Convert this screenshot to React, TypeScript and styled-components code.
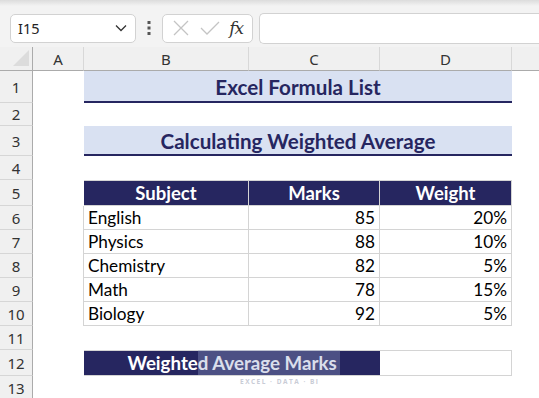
import React from 'react';
import styled, { createGlobalStyle } from 'styled-components';

const GlobalStyle = createGlobalStyle`
  html, body {
    margin: 0;
    padding: 0;
    background: #ffffff;
    overflow: hidden;
  }
  body {
    font-family: 'Noto Sans', 'Open Sans', sans-serif;
  }
`;

const NAVY = '#262660';
const TITLE_FILL = '#d9e1f2';
const GRID = '#d4d4d4';
const COLS = '33px 51px 165px 131px 132px 1fr';

const Page = styled.div`
  width: 539px;
  height: 398px;
  overflow: hidden;
  background: #ffffff;
  position: relative;
`;

const TopShade = styled.div`
  height: 6px;
  background: linear-gradient(#dcdcdc, #f3f3f3);
`;

const FormulaBar = styled.div`
  display: flex;
  align-items: center;
  height: 41px;
  padding: 3px 0 0 10px;
  box-sizing: border-box;
  background: #f3f3f3;
`;

const NameBox = styled.div`
  width: 126px;
  height: 29px;
  box-sizing: border-box;
  display: flex;
  align-items: center;
  justify-content: space-between;
  padding: 0 8px 0 7px;
  background: #ffffff;
  border: 1px solid #d2d2d2;
  border-radius: 5px;
  font-size: 14.5px;
  color: #222;
`;

const Dots = styled.div`
  width: 26px;
  display: flex;
  justify-content: center;
`;

const FnBox = styled.div`
  width: 91px;
  height: 29px;
  box-sizing: border-box;
  display: flex;
  align-items: center;
  justify-content: space-around;
  padding: 0 4px;
  background: #ffffff;
  border: 1px solid #d2d2d2;
  border-radius: 5px;
`;

const Fx = styled.span`
  font-family: 'DejaVu Serif', 'Liberation Serif', serif;
  font-style: italic;
  font-size: 17px;
  color: #333;
  letter-spacing: -1px;
`;

const FormulaInput = styled.div`
  flex: 1;
  height: 29px;
  margin-left: 6px;
  background: #ffffff;
  border: 1px solid #d2d2d2;
  border-right: none;
  border-radius: 5px 0 0 5px;
`;

const Sheet = styled.div`
  display: grid;
  grid-template-columns: ${COLS};
`;

const ColHead = styled.div<{ $last?: boolean }>`
  height: 23px;
  background: #f0f0f0;
  border-bottom: 1px solid #ababab;
  border-right: ${(p) => (p.$last ? 'none' : '1px solid #d8d8d8')};
  display: flex;
  align-items: center;
  justify-content: center;
  font-size: 15px;
  color: #333;
`;

const Corner = styled.div`
  height: 23px;
  background: #f0f0f0;
  border-bottom: 1px solid #ababab;
  border-right: 1px solid #ababab;
  position: relative;
  &::after {
    content: '';
    position: absolute;
    right: 3px;
    bottom: 4px;
    border-style: solid;
    border-width: 0 0 16px 16px;
    border-color: transparent transparent #dcdcdc transparent;
  }
`;

const RowHead = styled.div<{ $h: number }>`
  height: ${(p) => p.$h - 1}px;
  background: #f0f0f0;
  border-right: 1px solid #ababab;
  border-bottom: 1px solid #d6d6d6;
  display: flex;
  align-items: center;
  justify-content: center;
  font-size: 15px;
  color: #333;
`;

type CellKind = 'blank' | 'title' | 'head' | 'data' | 'banner' | 'empty';

const Cell = styled.div<{ $kind: CellKind; $span?: number; $right?: boolean; $h: number }>`
  grid-column: span ${(p) => p.$span || 1};
  height: ${(p) => p.$h}px;
  box-sizing: border-box;
  display: flex;
  align-items: center;
  padding: 0 4px;
  font-family: Lato, 'Open Sans', sans-serif;
  font-size: 17.2px;
  color: #000;
  justify-content: ${(p) => (p.$right ? 'flex-end' : 'flex-start')};
  ${(p) =>
    p.$kind === 'title' &&
    `
    background: ${TITLE_FILL};
    border-bottom: 2px solid ${NAVY};
    justify-content: center;
    font-weight: 700;
    font-size: 20.6px;
    color: ${NAVY};
    padding-top: 1px;
  `}
  ${(p) =>
    p.$kind === 'head' &&
    `
    background: ${NAVY};
    border-right: 1px solid ${GRID};
    border-top: 1px solid ${GRID};
    border-bottom: 1px solid ${GRID};
    justify-content: center;
    font-weight: 700;
    color: #fff;
    font-size: 18.5px;
  `}
  ${(p) =>
    p.$kind === 'data' &&
    `
    border-right: 1px solid ${GRID};
    border-bottom: 1px solid ${GRID};
  `}
  ${(p) =>
    p.$kind === 'banner' &&
    `
    background: ${NAVY};
    border-top: 1px solid ${GRID};
    border-bottom: 1px solid ${GRID};
    justify-content: center;
    font-weight: 700;
    color: #fff;
    font-size: 18.7px;
  `}
  ${(p) =>
    p.$kind === 'empty' &&
    `
    border: 1px solid ${GRID};
    border-left: none;
  `}
`;

const Watermark = styled.div`
  position: absolute;
  left: 198px;
  top: 350px;
  width: 142px;
  height: 25px;
  background: rgba(150, 160, 200, 0.35);
  pointer-events: none;
  &::after {
    content: 'EXCEL · DATA · BI';
    position: absolute;
    left: 42px;
    top: 27px;
    font-family: 'Open Sans', sans-serif;
    font-weight: 700;
    font-size: 6.5px;
    letter-spacing: 1.5px;
    color: #c9ccd6;
    white-space: nowrap;
  }
`;

const CloseIcon = () => (
  <svg width="18" height="18" viewBox="0 0 18 18" fill="none" stroke="#c4c4c4" strokeWidth="1.3">
    <path d="M2 2 L16 16 M16 2 L2 16" />
  </svg>
);

const CheckIcon = () => (
  <svg width="20" height="16" viewBox="0 0 20 16" fill="none" stroke="#c4c4c4" strokeWidth="1.3">
    <path d="M1 8 L7 14 L19 2" />
  </svg>
);

const Chevron = () => (
  <svg width="12" height="8" viewBox="0 0 12 8" fill="none" stroke="#333" strokeWidth="1.3">
    <path d="M1 1.5 L6 6.5 L11 1.5" />
  </svg>
);

const VDots = () => (
  <svg width="4" height="14" viewBox="0 0 4 14" fill="#555">
    <rect x="0.5" y="0" width="3" height="3" />
    <rect x="0.5" y="5.5" width="3" height="3" />
    <rect x="0.5" y="11" width="3" height="3" />
  </svg>
);

const subjects = [
  { name: 'English', marks: 85, weight: '20%' },
  { name: 'Physics', marks: 88, weight: '10%' },
  { name: 'Chemistry', marks: 82, weight: '5%' },
  { name: 'Math', marks: 78, weight: '15%' },
  { name: 'Biology', marks: 92, weight: '5%' },
];

const heights = [32, 23, 30, 24, 26, 24, 24, 24, 24, 24, 24, 26, 24];

const App: React.FC = () => {
  const blankRow = (n: number) => (
    <React.Fragment key={n}>
      <RowHead $h={heights[n - 1]}>{n}</RowHead>
      <Cell $kind="blank" $h={heights[n - 1]} $span={5} />
    </React.Fragment>
  );

  const titleRow = (n: number, text: string) => (
    <React.Fragment key={n}>
      <RowHead $h={heights[n - 1]}>{n}</RowHead>
      <Cell $kind="blank" $h={heights[n - 1]} />
      <Cell $kind="title" $h={heights[n - 1]} $span={3}>{text}</Cell>
      <Cell $kind="blank" $h={heights[n - 1]} />
    </React.Fragment>
  );

  return (
    <Page>
      <GlobalStyle />
      <TopShade />
      <FormulaBar>
        <NameBox>
          <span>I15</span>
          <Chevron />
        </NameBox>
        <Dots>
          <VDots />
        </Dots>
        <FnBox>
          <CloseIcon />
          <CheckIcon />
          <Fx>fx</Fx>
        </FnBox>
        <FormulaInput />
      </FormulaBar>
      <Sheet>
        <Corner />
        <ColHead>A</ColHead>
        <ColHead>B</ColHead>
        <ColHead>C</ColHead>
        <ColHead>D</ColHead>
        <ColHead $last />

        {titleRow(1, 'Excel Formula List')}
        {blankRow(2)}
        {titleRow(3, 'Calculating Weighted Average')}
        {blankRow(4)}

        <RowHead $h={heights[4]}>5</RowHead>
        <Cell $kind="blank" $h={heights[4]} />
        <Cell $kind="head" $h={heights[4]}>Subject</Cell>
        <Cell $kind="head" $h={heights[4]}>Marks</Cell>
        <Cell $kind="head" $h={heights[4]}>Weight</Cell>
        <Cell $kind="blank" $h={heights[4]} />

        {subjects.map((s, i) => {
          const h = heights[5 + i];
          return (
            <React.Fragment key={s.name}>
              <RowHead $h={h}>{6 + i}</RowHead>
              <Cell $kind="blank" $h={h} style={{ borderRight: `1px solid ${GRID}` }} />
              <Cell $kind="data" $h={h}>{s.name}</Cell>
              <Cell $kind="data" $h={h} $right>{s.marks}</Cell>
              <Cell $kind="data" $h={h} $right>{s.weight}</Cell>
              <Cell $kind="blank" $h={h} />
            </React.Fragment>
          );
        })}

        {blankRow(11)}

        <RowHead $h={heights[11]}>12</RowHead>
        <Cell $kind="blank" $h={heights[11]} />
        <Cell $kind="banner" $h={heights[11]} $span={2}>Weighted Average Marks</Cell>
        <Cell $kind="empty" $h={heights[11]} />
        <Cell $kind="blank" $h={heights[11]} />

        {blankRow(13)}
      </Sheet>
      <Watermark />
    </Page>
  );
};

export default App;
